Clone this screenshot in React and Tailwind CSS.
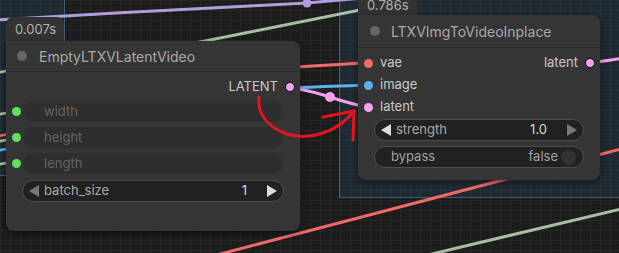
import React from "react";

function Dot({ color, ring = false, size = 9 }) {
  return (
    <span
      className={`inline-block rounded-full shrink-0 ${ring ? "border-[1.5px] border-[#111]" : ""}`}
      style={{ width: size, height: size, background: color }}
    />
  );
}

function DisabledWidget({ label }) {
  return (
    <div className="flex items-center h-[21px]">
      <div className="w-[17px] flex items-center">
        <span className="ml-[6px] w-[9px] h-[9px] rounded-full bg-[#5ee35a]" />
      </div>
      <div className="flex-1 mr-[17px] h-full rounded-full bg-[#2e2e2e] flex items-center pl-[21px] text-[13px] text-[#636363]">
        {label}
      </div>
    </div>
  );
}

function TriLeft({ color }) {
  return (
    <svg width="10" height="12" viewBox="0 0 10 12" className="shrink-0">
      <path d="M0 6 L10 0 L10 12 Z" fill={color} />
    </svg>
  );
}

function TriRight({ color }) {
  return (
    <svg width="10" height="12" viewBox="0 0 10 12" className="shrink-0">
      <path d="M10 6 L0 0 L0 12 Z" fill={color} />
    </svg>
  );
}

function NumberWidget({ label, value, leftBright, className = "" }) {
  const bright = "#dcdcdc";
  const dim = "#777777";
  return (
    <div
      className={`h-full rounded-full bg-[#212121] border border-[#4e4e4e] flex items-center text-[13px] ${className}`}
    >
      <span className="ml-[6px] flex">
        <TriLeft color={leftBright ? bright : dim} />
      </span>
      <span className="ml-[5px] text-[#a8a8a8]">{label}</span>
      <span className="ml-auto text-[#d8d8d8]">{value}</span>
      <span className="ml-[20px] mr-[6px] flex">
        <TriRight color={leftBright ? dim : bright} />
      </span>
    </div>
  );
}

export default function App() {
  return (
    <div className="relative w-[619px] h-[253px] overflow-hidden bg-[#1c1c1c] font-['Inter',sans-serif] [background-image:linear-gradient(to_right,#262626_1px,transparent_1px),linear-gradient(to_bottom,#262626_1px,transparent_1px)] [background-size:10px_10px]">
      {/* groups */}
      <div className="absolute left-[-10px] top-[-10px] w-[75px] h-[186px] bg-[rgba(45,95,135,0.2)] border border-[rgba(80,130,170,0.6)]" />
      <div className="absolute left-[339px] top-[-10px] w-[300px] h-[208px] bg-[rgba(45,95,135,0.2)] border border-[rgba(80,130,170,0.6)]" />

      {/* links */}
      <svg className="absolute inset-0" width="619" height="253" fill="none" strokeLinecap="round">
        <path d="M-5 20 C 100 14, 200 8, 307 3 L 385 -4" stroke="#b29ddc" strokeWidth="3" />
        <circle cx="307" cy="3" r="4.5" fill="#b29ddc" />
        <path d="M150 52 L 430 -4" stroke="#a6bfa0" strokeWidth="3" />
        <path d="M280 68 C 320 66, 340 64, 368 63" stroke="#f06868" strokeWidth="3" />
        <path d="M285 88 C 320 87, 340 86, 368 85" stroke="#5cb0f0" strokeWidth="3" />
        <path d="M290 88 C 310 90, 320 94, 330 97 C 345 102, 355 105, 368 107" stroke="#f0a0ee" strokeWidth="3" />
        <circle cx="330" cy="97" r="5" fill="#f0a0ee" />
        <path d="M590 63 C 600 62, 610 60, 625 58" stroke="#f0a0ee" strokeWidth="3" />
        <path d="M205 258 L 625 148" stroke="#f06868" strokeWidth="3" />
        <path d="M415 258 L 625 208" stroke="#a6bfa0" strokeWidth="3" />
        <path d="M-5 73 L 12 70" stroke="#a6bfa0" strokeWidth="2.5" />
        <path d="M-5 115 L 12 112" stroke="#a6bfa0" strokeWidth="2.5" />
        <path d="M-5 137 L 12 133" stroke="#f06868" strokeWidth="2.5" />
        <path d="M-5 142 L 12 139" stroke="#a6bfa0" strokeWidth="2.5" />
        <path d="M-5 151 L 12 148" stroke="#5cb0f0" strokeWidth="2.5" />
        <path d="M-5 165 L 12 162" stroke="#a6bfa0" strokeWidth="2.5" />
      </svg>

      {/* Node 1 badge */}
      <div className="absolute left-[6px] top-[17px] w-[58px] h-[26px] rounded-t-[7px] bg-[#333333] pl-[9px] pt-[3px] text-[13px] text-[#b0b0b0]">
        0.007s
      </div>
      {/* Node 1 */}
      <div className="absolute left-[6px] top-[41px] w-[294px] h-[190px] rounded-[8px] rounded-tl-none bg-[#353535] shadow-[0_2px_6px_rgba(0,0,0,0.5)] flex flex-col">
        <div className="h-[31px] flex items-center border-b border-[#2b2b2b] shrink-0">
          <span className="ml-[11px] w-[10px] h-[10px] rounded-full bg-[#666]" />
          <span className="ml-[12px] text-[14px] text-[#a8a8a8]">EmptyLTXVLatentVideo</span>
        </div>
        <div className="pt-[4px] flex flex-col">
          <div className="h-[22px] flex items-center justify-end">
            <span className="text-[13px] text-[#c8c8c8]">LATENT</span>
            <span className="ml-[7px] mr-[5px] flex">
              <Dot color="#f3a2f0" ring size={10} />
            </span>
          </div>
          <div className="mt-[3px] flex flex-col gap-[5px]">
            <DisabledWidget label="width" />
            <DisabledWidget label="height" />
            <DisabledWidget label="length" />
            <div className="h-[22px] mt-[1px] flex">
              <NumberWidget label="batch_size" value="1" leftBright={false} className="flex-1 mx-[16px]" />
            </div>
          </div>
        </div>
      </div>

      {/* Node 2 badge */}
      <div className="absolute left-[358px] top-[-10px] w-[59px] h-[27px] rounded-t-[7px] bg-[#333333] pl-[9px] pt-[6px] text-[13px] text-[#b0b0b0]">
        0.786s
      </div>
      {/* Node 2 */}
      <div className="absolute left-[358px] top-[15px] w-[242px] h-[165px] rounded-[8px] rounded-tl-none bg-[#353535] shadow-[0_2px_6px_rgba(0,0,0,0.5)] flex flex-col">
        <div className="h-[33px] flex items-center border-b border-[#2b2b2b] shrink-0">
          <span className="ml-[12px] w-[10px] h-[10px] rounded-full bg-[#666]" />
          <span className="ml-[11px] text-[14px] text-[#a8a8a8]">LTXVImgToVideoInplace</span>
        </div>
        <div className="pt-[4px] flex flex-col text-[13px] text-[#c8c8c8]">
          <div className="h-[22px] flex items-center">
            <span className="ml-[6px] flex"><Dot color="#f06868" /></span>
            <span className="ml-[7px]">vae</span>
            <span className="ml-auto">latent</span>
            <span className="ml-[7px] mr-[5px] flex">
              <Dot color="#f3a2f0" ring size={10} />
            </span>
          </div>
          <div className="h-[22px] flex items-center">
            <span className="ml-[6px] flex"><Dot color="#5cb0f0" /></span>
            <span className="ml-[7px]">image</span>
          </div>
          <div className="h-[22px] flex items-center">
            <span className="ml-[6px] flex"><Dot color="#f3a2f0" /></span>
            <span className="ml-[7px]">latent</span>
          </div>
          <div className="mt-[1px] h-[22px] flex">
            <NumberWidget label="strength" value="1.0" leftBright className="flex-1 mx-[16px]" />
          </div>
          <div className="mt-[5px] h-[22px] flex">
            <div className="flex-1 mx-[16px] h-full rounded-full bg-[#212121] border border-[#4e4e4e] flex items-center text-[13px]">
              <span className="ml-[16px] text-[#a0a0a0]">bypass</span>
              <span className="ml-auto text-[#a0a0a0]">false</span>
              <span className="ml-[3px] mr-[7px] w-[15px] h-[15px] rounded-full bg-[#333]" />
            </div>
          </div>
        </div>
      </div>

      {/* annotation */}
      <svg className="absolute inset-0 pointer-events-none" width="619" height="253" fill="none" strokeLinecap="round" strokeLinejoin="round">
        <path d="M259 97 C 257 112, 266 127, 287 134 C 310 141, 338 132, 354 111" stroke="#e3141c" strokeWidth="3" />
        <path d="M323 117 L 354 111 L 353 140" stroke="#e3141c" strokeWidth="3" />
      </svg>
    </div>
  );
}
